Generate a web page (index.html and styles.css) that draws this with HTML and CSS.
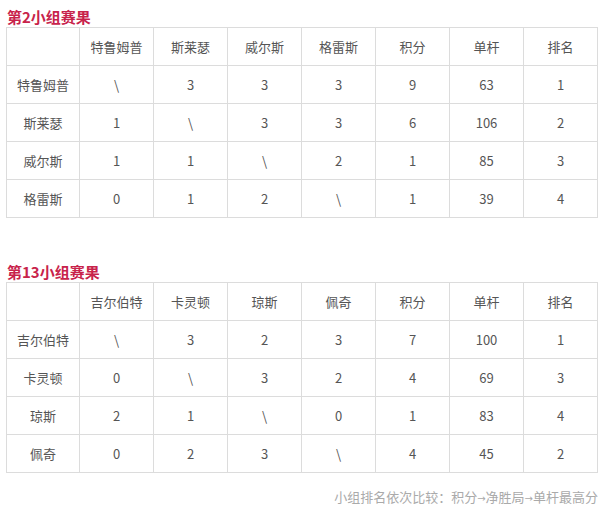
FILE: index.html
```html
<!DOCTYPE html>
<html lang="zh-CN">
<head>
<meta charset="utf-8">
<link rel="stylesheet" href="styles.css">
</head>
<body>
<section class="group">
  <h2 class="title">第2小组赛果</h2>
  <table class="results">
    <colgroup><col class="c-name"><col><col><col><col><col><col><col></colgroup>
    <tr><td></td><td>特鲁姆普</td><td>斯莱瑟</td><td>威尔斯</td><td>格雷斯</td><td>积分</td><td>单杆</td><td>排名</td></tr>
    <tr><td>特鲁姆普</td><td>\</td><td>3</td><td>3</td><td>3</td><td>9</td><td>63</td><td>1</td></tr>
    <tr><td>斯莱瑟</td><td>1</td><td>\</td><td>3</td><td>3</td><td>6</td><td>106</td><td>2</td></tr>
    <tr><td>威尔斯</td><td>1</td><td>1</td><td>\</td><td>2</td><td>1</td><td>85</td><td>3</td></tr>
    <tr><td>格雷斯</td><td>0</td><td>1</td><td>2</td><td>\</td><td>1</td><td>39</td><td>4</td></tr>
  </table>
</section>
<section class="group group-second">
  <h2 class="title">第13小组赛果</h2>
  <table class="results">
    <colgroup><col class="c-name"><col><col><col><col><col><col><col></colgroup>
    <tr><td></td><td>吉尔伯特</td><td>卡灵顿</td><td>琼斯</td><td>佩奇</td><td>积分</td><td>单杆</td><td>排名</td></tr>
    <tr><td>吉尔伯特</td><td>\</td><td>3</td><td>2</td><td>3</td><td>7</td><td>100</td><td>1</td></tr>
    <tr><td>卡灵顿</td><td>0</td><td>\</td><td>3</td><td>2</td><td>4</td><td>69</td><td>3</td></tr>
    <tr><td>琼斯</td><td>2</td><td>1</td><td>\</td><td>0</td><td>1</td><td>83</td><td>4</td></tr>
    <tr><td>佩奇</td><td>0</td><td>2</td><td>3</td><td>\</td><td>4</td><td>45</td><td>2</td></tr>
  </table>
</section>
<p class="note">小组排名依次比较：积分<span class="arrow">→</span>净胜局<span class="arrow">→</span>单杆最高分</p>
</body>
</html>
```
FILE: styles.css
```css
html, body {
  margin: 0;
  background: #fff;
}
body {
  padding: 7px 0 0 6px;
  font-family: "Noto Sans CJK SC", "Noto Sans", sans-serif;
  color: #555;
}
.group {
  width: 592px;
}
.group-second {
  margin-top: 44px;
}
.title {
  margin: 0;
  padding-left: 1px;
  font-size: 15px;
  line-height: 20px;
  font-weight: bold;
  color: #c8234b;
}
.results {
  width: 592px;
  border-collapse: collapse;
  table-layout: fixed;
}
.c-name {
  width: 73px;
}
.results td {
  height: 37px;
  padding: 0;
  border: 1px solid #dcdcdc;
  text-align: center;
  vertical-align: middle;
  font-size: 13px;
  line-height: 18px;
  color: #555;
}
.note {
  width: 592px;
  margin: 15px 0 0;
  text-align: right;
  font-size: 13px;
  line-height: 18px;
  color: #aaa;
}
.arrow {
  font-family: "DejaVu Sans", sans-serif;
  font-size: 10px;
}
```
